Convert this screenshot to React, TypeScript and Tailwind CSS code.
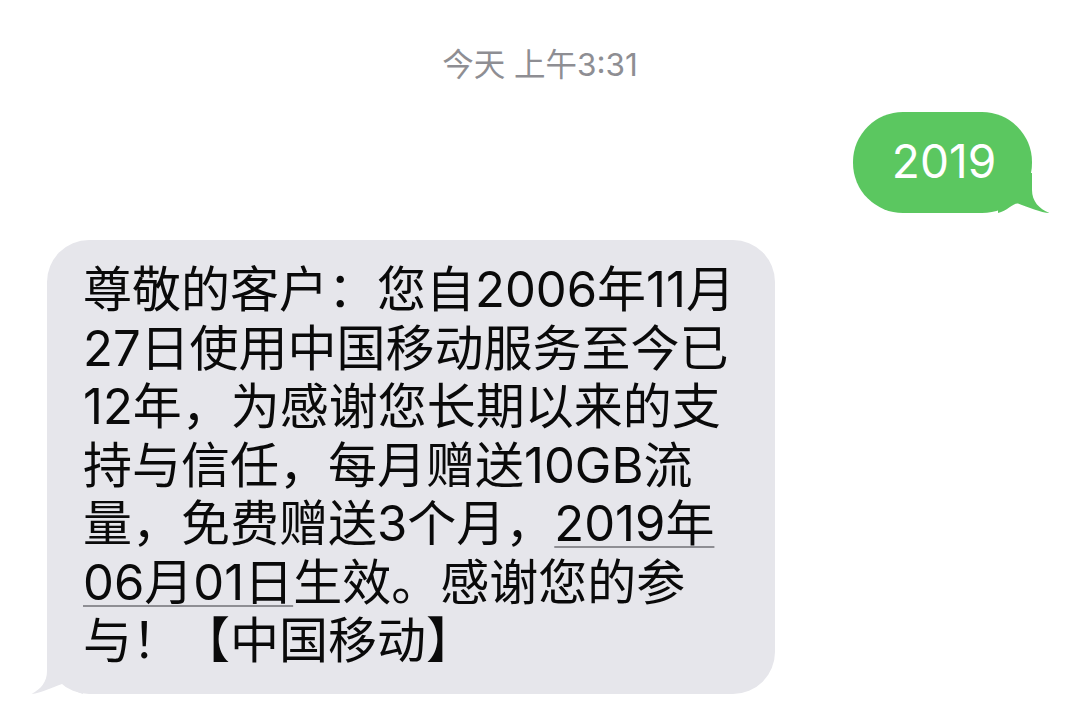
import React from "react";

const FONT = 'Inter, "Noto Sans CJK SC", "Noto Sans", sans-serif';

export default function App() {
  const lines: React.ReactNode[] = [
    "尊敬的客户：您自2006年11月",
    "27日使用中国移动服务至今已",
    "12年，为感谢您长期以来的支",
    "持与信任，每月赠送10GB流",
    <>
      量，免费赠送3个月，
      <span className="underline decoration-[#8e8e93] decoration-2 underline-offset-[5px]">2019年</span>
    </>,
    <>
      <span className="underline decoration-[#8e8e93] decoration-2 underline-offset-[5px]">06月01日</span>
      生效。感谢您的参
    </>,
    "与！【中国移动】",
  ];

  return (
    <div
      className="w-[1080px] h-[717px] bg-white overflow-hidden flex flex-col"
      style={{ fontFamily: FONT }}
    >
      <div className="pt-[46px] text-center text-[31.5px] leading-[37px] text-[#8e8e93]">
        今天 上午3:31
      </div>

      <div className="mt-[29px] flex justify-end pr-[48px]">
        <div className="relative w-[179px] h-[101px] rounded-[50px] bg-[#5bc760] flex items-center justify-center">
          <span className="relative z-10 text-white text-[46px] leading-none pb-[3px] pl-[3px]">2019</span>
          <svg
            className="absolute right-[-18px] bottom-0"
            width="52"
            height="40"
            viewBox="0 0 52 40"
          >
            <path
              d="M34 0 L34 17 C34 28 41 36 51.5 40 C43 39.8 30 34 20 30.5 C15 30 9 38 0 40 L0 0 Z"
              fill="#5bc760"
            />
          </svg>
        </div>
      </div>

      <div className="mt-[27px] pl-[47px]">
        <div className="relative w-[728px] rounded-[42px] bg-[#e6e6eb] pt-[21px] pb-[23px] pl-[36px]">
          <svg
            className="absolute left-[-16px] bottom-0"
            width="52"
            height="45"
            viewBox="0 0 52 45"
          >
            <path
              d="M16 0 L16 22 C16 33 10 40 0.5 45 C10 44 22 38 31 35 C36 34.5 42 42 52 45 L52 0 Z"
              fill="#e6e6eb"
            />
          </svg>
          <div className="relative text-[49px] leading-[58.5px] text-[#0a0a0a]">
            {lines.map((l, i) => (
              <div key={i} className="whitespace-nowrap">
                {l}
              </div>
            ))}
          </div>
        </div>
      </div>
    </div>
  );
}
